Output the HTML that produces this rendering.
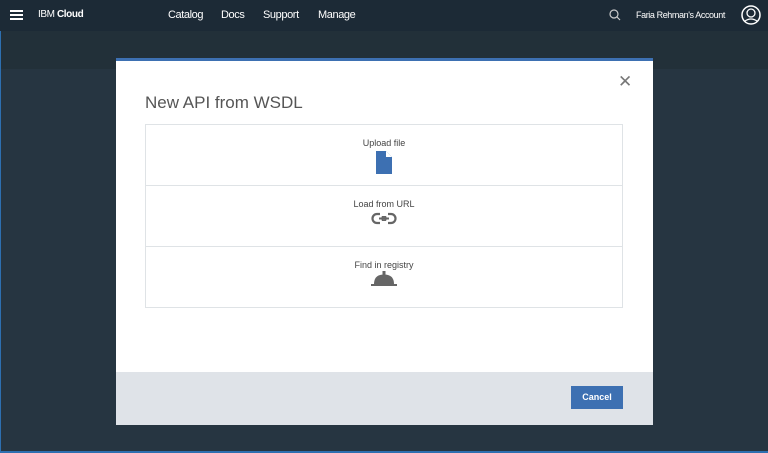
<!DOCTYPE html>
<html><head><style>
body{margin:0;width:768px;height:453px;overflow:hidden;background:#263541;font-family:"Liberation Sans",sans-serif;position:relative}
.hdr{position:absolute;left:0;top:0;width:768px;height:31px;background:#1c2a36;color:#fff;font-size:11px}
.hdr span{position:absolute;top:9px;letter-spacing:-0.4px}
.bg{position:absolute;left:0;top:31px;width:768px;height:422px;background:#263541;border-left:1px solid #2d6fb0;box-sizing:border-box;border-bottom:2px solid #2d6fb0}
.band{position:absolute;left:1px;top:31px;width:767px;height:38px;background:#223039}
.modal{position:absolute;left:116px;top:58px;width:537px;height:367px;background:#fff;border-top:3px solid #3d70b2;box-sizing:border-box}
.title{position:absolute;left:29px;top:32px;font-size:17px;color:#555}
.x{position:absolute;left:502px;top:11px;font-size:17px;color:#777}
.box{position:absolute;left:29px;top:63px;width:478px;height:184px;border:1px solid #dfe3e6;box-sizing:border-box}
.row{height:61px;border-bottom:1px solid #dfe3e6;text-align:center;font-size:9px;color:#444;padding-top:13px;box-sizing:border-box;position:relative}
.row:last-child{border-bottom:none}
.foot{position:absolute;left:0;bottom:0;width:537px;height:53px;background:#dfe3e8}
.btn{position:absolute;left:455px;top:14px;width:52px;height:23px;background:#3d70b2;color:#fff;font-size:9px;font-weight:bold;text-align:center;line-height:23px}
</style></head><body>
<div class="bg"></div>
<div class="band"></div>
<div class="hdr">
<div style="position:absolute;left:10px;top:10px;width:13px;height:2px;background:#fff;box-shadow:0 4px 0 #fff,0 8px 0 #fff"></div>
<span style="left:38px;font-size:10px">IBM <b>Cloud</b></span>
<span style="left:168px">Catalog</span><span style="left:221px">Docs</span><span style="left:263px">Support</span><span style="left:318px">Manage</span>
<svg style="position:absolute;left:609px;top:9px" width="12" height="12"><circle cx="5" cy="5" r="4" fill="none" stroke="#ccc" stroke-width="1.2"/><line x1="8" y1="8" x2="11" y2="11" stroke="#ccc" stroke-width="1.2"/></svg>
<span style="left:636px;font-size:9px;top:10px">Faria Rehman's Account</span>
<svg style="position:absolute;left:741px;top:5px" width="20" height="20"><circle cx="10" cy="10" r="9" fill="none" stroke="#fff" stroke-width="1.5"/><circle cx="10" cy="8" r="4" fill="none" stroke="#fff" stroke-width="1.3"/><path d="M4 16 Q10 12 16 16" fill="none" stroke="#fff" stroke-width="1.3"/></svg>
</div>
<div class="modal">
<div class="title">New API from WSDL</div>
<div class="x">✕</div>
<div class="box">
<div class="row">Upload file<br><svg style="margin-top:3px" width="16" height="23"><path d="M0 0H10L16 6V23H0Z" fill="#3d70b2"/><path d="M10 0L16 6H10Z" fill="#fff"/></svg></div>
<div class="row">Load from URL<br><svg style="margin-top:3px" width="26" height="13"><rect x="1.5" y="2" width="13" height="9" rx="4.5" fill="none" stroke="#666" stroke-width="2.2"/><rect x="11.5" y="2" width="13" height="9" rx="4.5" fill="none" stroke="#666" stroke-width="2.2"/><rect x="9" y="0" width="8" height="4" fill="#fff"/><rect x="9" y="9" width="8" height="4" fill="#fff"/><line x1="8" y1="6.5" x2="18" y2="6.5" stroke="#666" stroke-width="2"/></svg></div>
<div class="row">Find in registry<br><svg style="margin-top:1px" width="26" height="16"><rect x="11.5" y="0" width="3" height="4" fill="#666"/><path d="M3 13 Q3 3.5 13 3.5 Q23 3.5 23 13Z" fill="#666"/><rect x="0" y="13" width="26" height="2" fill="#666"/></svg></div>
</div>
<div class="foot"><div class="btn">Cancel</div></div>
</div>
</body></html>
